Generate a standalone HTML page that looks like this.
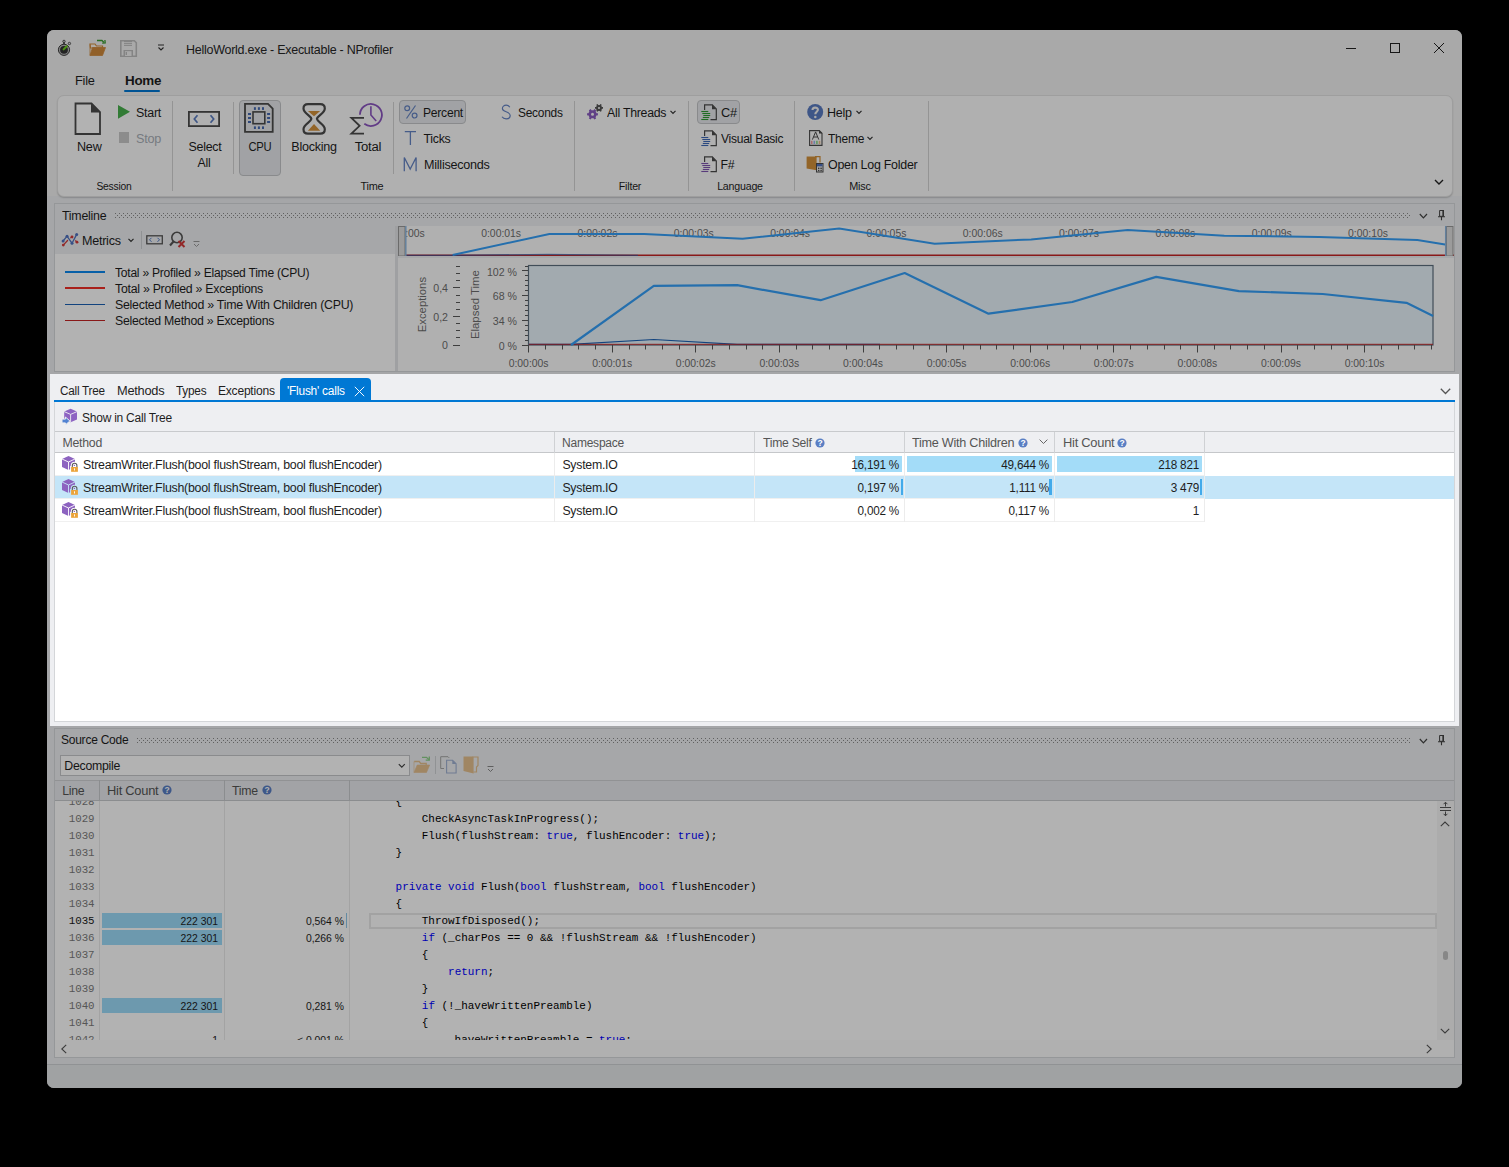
<!DOCTYPE html><html><head><meta charset="utf-8"><title>NProfiler</title><style>
html,body{margin:0;padding:0;}
body{width:1509px;height:1167px;background:#000;position:relative;overflow:hidden;font-family:"Liberation Sans",sans-serif;}
body div{position:absolute;box-sizing:border-box;}
svg{overflow:visible;}
</style></head><body>
<div style="left:47px;top:30px;width:1415px;height:1058px;background:#eceef1;border-radius:7px;"></div>
<div style="left:47px;top:30px;width:1415px;height:36px;background:#f3f3f3;border-radius:7px 7px 0 0;"></div>
<div style="left:47px;top:66px;width:1415px;height:130px;background:#f3f3f3;"></div>
<svg style="position:absolute;left:57px;top:39px;" width="16" height="18" viewBox="0 0 16 18"><circle cx="7" cy="10.8" r="5.6" fill="#b8b8b8" stroke="#3a3a3a" stroke-width="1"/>
<circle cx="7" cy="10.8" r="3.9" fill="#333"/>
<line x1="6.6" y1="10.4" x2="9.8" y2="7.2" stroke="#6ad21a" stroke-width="2" stroke-linecap="round"/>
<circle cx="7" cy="2.4" r="1.2" fill="#e0e0e0" stroke="#444" stroke-width="0.9"/><rect x="6.2" y="3.6" width="1.6" height="1.6" fill="#333"/>
<circle cx="12.4" cy="4.5" r="1.2" fill="#e0e0e0" stroke="#444" stroke-width="0.9"/></svg>
<svg style="position:absolute;left:89px;top:39px;" width="18" height="18" viewBox="0 0 18 18">
<path d="M1 5 h5 l1.5 2 h6 v2 h-12z" fill="#fdf6ec" stroke="#d38d3b" stroke-width="1.2"/>
<path d="M1 16.5 v-11 M1 16.5 h12.5 l3 -8 h-13 l-2.5 8z" fill="#d08a3c" stroke="#d08a3c" stroke-width="0.8"/>
<path d="M8 1.5 h5 l2 2" fill="none" stroke="#3a9c32" stroke-width="1.3"/>
<path d="M13.2 4.2 l3 -0.2 l-0.3 -3" fill="none" stroke="#3a9c32" stroke-width="1.3"/>
</svg>
<svg style="position:absolute;left:120px;top:40px;" width="17" height="17" viewBox="0 0 17 17">
<path d="M0.8 0.8 h13.5 l2 2 v13.4 h-15.5z" fill="none" stroke="#bdbdbd" stroke-width="1.6"/>
<rect x="4" y="1" width="8" height="5" fill="#bdbdbd"/>
<rect x="4" y="2.2" width="8" height="0.9" fill="#f3f3f3"/><rect x="4" y="4.2" width="8" height="0.9" fill="#f3f3f3"/>
<rect x="3.5" y="10" width="9.5" height="6" fill="#bdbdbd"/><rect x="5" y="11.2" width="6.5" height="4.8" fill="#f3f3f3"/><rect x="5.6" y="12" width="1.4" height="3" fill="#bdbdbd"/>
</svg>
<svg style="position:absolute;left:157px;top:44px;" width="8" height="8" viewBox="0 0 8 8"><line x1="1" y1="1" x2="7" y2="1" stroke="#333" stroke-width="1"/><path d="M1.5 3.5 l2.5 2.5 l2.5 -2.5" fill="none" stroke="#333" stroke-width="1.1"/></svg>
<div style="left:186px;top:42px;font-family:'Liberation Sans', sans-serif;font-size:12.4px;line-height:16px;color:#262626;white-space:pre;letter-spacing:-0.250px;transform:scaleX(1.0066);transform-origin:0% 50%;">HelloWorld.exe - Executable - NProfiler</div>
<div style="left:1346px;top:48px;width:10px;height:1px;background:#222;"></div>
<div style="left:1390px;top:43px;width:10px;height:10px;border:1px solid #222;"></div>
<svg style="position:absolute;left:1433px;top:42px;" width="12" height="12" viewBox="0 0 12 12"><path d="M1 1 L11 11 M11 1 L1 11" stroke="#222" stroke-width="1"/></svg>
<div style="left:74.5px;top:73px;font-family:'Liberation Sans', sans-serif;font-size:12.5px;line-height:16px;color:#1e1e1e;white-space:pre;letter-spacing:-0.252px;transform:scaleX(1.0243);transform-origin:0% 50%;">File</div>
<div style="left:124.5px;top:73px;font-family:'Liberation Sans', sans-serif;font-size:12.92px;line-height:16px;color:#1e1e1e;white-space:pre;letter-spacing:-0.260px;transform:scaleX(1.0386);transform-origin:0% 50%;font-weight:bold;">Home</div>
<div style="left:124px;top:90px;width:36px;height:2px;background:#0078d4;border-radius:1px;"></div>
<div style="left:57px;top:95px;width:1396px;height:102px;background:#fdfdfd;border:1px solid #e2e2e2;border-radius:7px;box-shadow:0 1px 1.5px rgba(0,0,0,0.18);"></div>
<div style="left:172px;top:101px;width:1px;height:90px;background:#d4d4d4;"></div>
<div style="left:233px;top:102px;width:1px;height:72px;background:#d4d4d4;"></div>
<div style="left:393px;top:102px;width:1px;height:72px;background:#d4d4d4;"></div>
<div style="left:574px;top:101px;width:1px;height:90px;background:#d4d4d4;"></div>
<div style="left:688px;top:101px;width:1px;height:90px;background:#d4d4d4;"></div>
<div style="left:794px;top:101px;width:1px;height:90px;background:#d4d4d4;"></div>
<div style="left:928px;top:101px;width:1px;height:90px;background:#d4d4d4;"></div>
<svg style="position:absolute;left:74px;top:102px;" width="28" height="34" viewBox="0 0 28 34"><path d="M1.5 1.5 h16 l8.5 8.5 v22 h-24.5z" fill="#fff" stroke="#4b4b4b" stroke-width="1.8"/><path d="M17 1.5 l9 9 h-9z" fill="#4b4b4b"/></svg>
<div style="left:76.5px;top:139px;font-family:'Liberation Sans', sans-serif;font-size:12.3px;line-height:16px;color:#1e1e1e;white-space:pre;letter-spacing:-0.248px;transform:scaleX(1.0267);transform-origin:0% 50%;">New</div>
<svg style="position:absolute;left:118px;top:105px;" width="12" height="14" viewBox="0 0 12 14"><path d="M0 0 L12 6.8 L0 13.8z" fill="#48b04c"/></svg>
<div style="left:136px;top:105px;font-family:'Liberation Sans', sans-serif;font-size:12.3px;line-height:16px;color:#1e1e1e;white-space:pre;letter-spacing:-0.248px;transform:scaleX(1.0106);transform-origin:0% 50%;">Start</div>
<div style="left:119px;top:132px;width:10px;height:11px;background:#c9c9c9;"></div>
<div style="left:136px;top:131px;font-family:'Liberation Sans', sans-serif;font-size:12.3px;line-height:16px;color:#aab0b8;white-space:pre;letter-spacing:-0.248px;transform:scaleX(1.0283);transform-origin:0% 50%;">Stop</div>
<div style="left:74.4px;top:178px;width:80px;text-align:center;font-family:'Liberation Sans', sans-serif;font-size:11.46px;line-height:16px;color:#1e1e1e;white-space:pre;letter-spacing:-0.231px;transform:scaleX(0.9);">Session</div>
<svg style="position:absolute;left:188px;top:111px;" width="32" height="16" viewBox="0 0 32 16"><rect x="0.9" y="0.9" width="30.2" height="14.2" fill="none" stroke="#4b4b4b" stroke-width="1.8"/><path d="M9.5 4.2 l-3.2 3.8 l3.2 3.8 M22.5 4.2 l3.2 3.8 l-3.2 3.8" fill="none" stroke="#5a7cc0" stroke-width="1.7"/></svg>
<div style="left:174.5px;top:139px;width:60px;text-align:center;font-family:'Liberation Sans', sans-serif;font-size:12.3px;line-height:16px;color:#1e1e1e;white-space:pre;letter-spacing:-0.248px;transform:scaleX(1.0092);transform-origin:50% 50%;">Select</div>
<div style="left:174.0px;top:155px;width:60px;text-align:center;font-family:'Liberation Sans', sans-serif;font-size:12.3px;line-height:16px;color:#1e1e1e;white-space:pre;letter-spacing:-0.248px;">All</div>
<div style="left:239px;top:100px;width:42px;height:76px;background:#e7e9ec;border:1px solid #c4c6c9;border-radius:4px;"></div>
<svg style="position:absolute;left:243px;top:102px;" width="32" height="32" viewBox="0 0 32 32"><path d="M2 1.9 H25 L29.7 6.6 V29.8 H2 Z" fill="none" stroke="#4b4b4b" stroke-width="1.8"/>
<rect x="10" y="9.9" width="11.8" height="11.8" fill="none" stroke="#4b4b4b" stroke-width="1.6"/>
<g fill="#4468b0"><rect x="10.9" y="5.2" width="2" height="2.7"/><rect x="14.9" y="5.2" width="2" height="2.7"/><rect x="19" y="5.2" width="2" height="2.7"/>
<rect x="10.9" y="24.4" width="2" height="2.6"/><rect x="14.9" y="24.4" width="2" height="2.6"/><rect x="19" y="24.4" width="2" height="2.6"/>
<rect x="5" y="11" width="3" height="2"/><rect x="5" y="15" width="3" height="2"/><rect x="5" y="19" width="3" height="2"/>
<rect x="24.1" y="11" width="3" height="2"/><rect x="24.1" y="15" width="3" height="2"/><rect x="24.1" y="19" width="3" height="2"/></g></svg>
<div style="left:230.0px;top:139px;width:60px;text-align:center;font-family:'Liberation Sans', sans-serif;font-size:12.3px;line-height:16px;color:#1e1e1e;white-space:pre;letter-spacing:-0.248px;transform:scaleX(0.9117);transform-origin:50% 50%;">CPU</div>
<svg style="position:absolute;left:301px;top:102px;" width="26" height="35" viewBox="0 0 26 35"><path d="M7 2.1 H19.3 C22.5 2.1 23.8 3.6 23.8 6.5 C23.8 11.5 16.5 13.5 15.9 16.9 C16.5 20.3 23.8 22.3 23.8 27.3 C23.8 30.2 22.5 31.7 19.3 31.7 H7 C3.8 31.7 2.5 30.2 2.5 27.3 C2.5 22.3 9.8 20.3 10.4 16.9 C9.8 13.5 2.5 11.5 2.5 6.5 C2.5 3.6 3.8 2.1 7 2.1 Z" fill="none" stroke="#4b4b4b" stroke-width="2.2"/>
<path d="M6.9 8.9 H19.2 L13 14.2z" fill="#d3913b"/><path d="M13 22.1 L19.2 28.7 H6.9z" fill="#d3913b"/></svg>
<div style="left:273.5px;top:139px;width:80px;text-align:center;font-family:'Liberation Sans', sans-serif;font-size:12.3px;line-height:16px;color:#1e1e1e;white-space:pre;letter-spacing:-0.248px;transform:scaleX(1.0222);transform-origin:50% 50%;">Blocking</div>
<svg style="position:absolute;left:349px;top:102px;" width="36" height="34" viewBox="0 0 36 34"><path d="M10.9 12.7 A11 11 0 1 1 15.3 21.8" fill="none" stroke="#8c56c0" stroke-width="1.8"/>
<path d="M21.9 4.2 V13 L27.2 19" fill="none" stroke="#8c56c0" stroke-width="1.6"/>
<path d="M15 15.9 H2.4 L10.6 23.8 L2.4 31.7 H15" fill="none" stroke="#4b4b4b" stroke-width="1.8" stroke-linejoin="miter"/></svg>
<div style="left:337.5px;top:139px;width:60px;text-align:center;font-family:'Liberation Sans', sans-serif;font-size:12.3px;line-height:16px;color:#1e1e1e;white-space:pre;letter-spacing:-0.248px;transform:scaleX(1.0670);transform-origin:50% 50%;">Total</div>
<div style="left:341.9px;top:178px;width:60px;text-align:center;font-family:'Liberation Sans', sans-serif;font-size:11.46px;line-height:16px;color:#1e1e1e;white-space:pre;letter-spacing:-0.231px;transform:scaleX(0.95);">Time</div>
<div style="left:399px;top:100px;width:67px;height:24px;background:#e7e9ec;border:1px solid #c4c6c9;border-radius:4px;"></div>
<svg style="position:absolute;left:404px;top:104px;" width="14" height="16" viewBox="0 0 14 16"><circle cx="3.2" cy="4.2" r="2.4" fill="none" stroke="#6584c4" stroke-width="1.2"/><circle cx="10.6" cy="11.6" r="2.4" fill="none" stroke="#6584c4" stroke-width="1.2"/><path d="M11.5 1.5 L2.5 14.5" stroke="#6584c4" stroke-width="1.2"/></svg>
<div style="left:422.5px;top:105px;font-family:'Liberation Sans', sans-serif;font-size:12.3px;line-height:16px;color:#1e1e1e;white-space:pre;letter-spacing:-0.248px;transform:scaleX(0.9839);transform-origin:0% 50%;">Percent</div>
<svg style="position:absolute;left:404px;top:130px;" width="14" height="16" viewBox="0 0 14 16"><path d="M0.8 1.6 H12 M6.4 1.6 V15" fill="none" stroke="#6584c4" stroke-width="1.3"/></svg>
<div style="left:423.5px;top:131px;font-family:'Liberation Sans', sans-serif;font-size:12.3px;line-height:16px;color:#1e1e1e;white-space:pre;letter-spacing:-0.248px;">Ticks</div>
<svg style="position:absolute;left:403px;top:156px;" width="15" height="16" viewBox="0 0 15 16"><path d="M1.3 15.2 V1.5 L7.2 13 L13.1 1.5 V15.2" fill="none" stroke="#6584c4" stroke-width="1.3" stroke-linejoin="miter"/></svg>
<div style="left:423.5px;top:157px;font-family:'Liberation Sans', sans-serif;font-size:12.3px;line-height:16px;color:#1e1e1e;white-space:pre;letter-spacing:-0.248px;transform:scaleX(1.0247);transform-origin:0% 50%;">Milliseconds</div>
<svg style="position:absolute;left:501px;top:104px;" width="10" height="16" viewBox="0 0 10 16"><path d="M8.8 3.2 C8 1.8 6.8 1.2 5.2 1.2 C3 1.2 1.4 2.5 1.4 4.4 C1.4 8.4 9.2 7.2 9.2 11.6 C9.2 13.6 7.5 14.9 5.1 14.9 C3.3 14.9 1.9 14.2 1 12.8" fill="none" stroke="#6584c4" stroke-width="1.2"/></svg>
<div style="left:517.5px;top:105px;font-family:'Liberation Sans', sans-serif;font-size:12.3px;line-height:16px;color:#1e1e1e;white-space:pre;letter-spacing:-0.248px;transform:scaleX(0.9689);transform-origin:0% 50%;">Seconds</div>
<svg style="position:absolute;left:580px;top:98px;" width="30" height="26" viewBox="0 0 30 26"><circle cx="12.5" cy="16.3" r="2.75" fill="none" stroke="#8a5cc0" stroke-width="2.50"/><line x1="15.90" y1="16.30" x2="17.90" y2="16.30" stroke="#8a5cc0" stroke-width="2.2"/><line x1="14.20" y1="19.24" x2="15.20" y2="20.98" stroke="#8a5cc0" stroke-width="2.2"/><line x1="10.80" y1="19.24" x2="9.80" y2="20.98" stroke="#8a5cc0" stroke-width="2.2"/><line x1="9.10" y1="16.30" x2="7.10" y2="16.30" stroke="#8a5cc0" stroke-width="2.2"/><line x1="10.80" y1="13.36" x2="9.80" y2="11.62" stroke="#8a5cc0" stroke-width="2.2"/><line x1="14.20" y1="13.36" x2="15.20" y2="11.62" stroke="#8a5cc0" stroke-width="2.2"/><circle cx="19" cy="9.9" r="2.00" fill="none" stroke="#555" stroke-width="2.00"/><line x1="21.40" y1="9.90" x2="23.00" y2="9.90" stroke="#555" stroke-width="1.7"/><line x1="20.20" y1="11.98" x2="21.00" y2="13.36" stroke="#555" stroke-width="1.7"/><line x1="17.80" y1="11.98" x2="17.00" y2="13.36" stroke="#555" stroke-width="1.7"/><line x1="16.60" y1="9.90" x2="15.00" y2="9.90" stroke="#555" stroke-width="1.7"/><line x1="17.80" y1="7.82" x2="17.00" y2="6.44" stroke="#555" stroke-width="1.7"/><line x1="20.20" y1="7.82" x2="21.00" y2="6.44" stroke="#555" stroke-width="1.7"/></svg>
<div style="left:607px;top:105px;font-family:'Liberation Sans', sans-serif;font-size:12.3px;line-height:16px;color:#1e1e1e;white-space:pre;letter-spacing:-0.248px;transform:scaleX(1.0006);transform-origin:0% 50%;">All Threads</div>
<svg style="position:absolute;left:670px;top:110px;" width="6" height="5" viewBox="0 0 6 5"><path d="M0.5 0.8 l2.5 2.6 l2.5 -2.6" fill="none" stroke="#333" stroke-width="1.2"/></svg>
<div style="left:600.3px;top:178px;width:60px;text-align:center;font-family:'Liberation Sans', sans-serif;font-size:11.46px;line-height:16px;color:#1e1e1e;white-space:pre;letter-spacing:-0.231px;transform:scaleX(0.93);">Filter</div>
<div style="left:697px;top:100px;width:43px;height:24px;background:#e7e9ec;border:1px solid #c4c6c9;border-radius:4px;"></div>
<svg style="position:absolute;left:701px;top:104px;" width="17" height="17" viewBox="0 0 17 17"><path d="M3.6 6 V0.9 H11.3 L15.3 4.9 V15.6 H9.5" fill="none" stroke="#4b4b4b" stroke-width="1.2"/><path d="M11 0.6 L15.6 5.2 H11z" fill="#4b4b4b"/>
<g stroke="#2e9b33" stroke-width="1.1"><line x1="0.3" y1="7.5" x2="7.3" y2="7.5"/><line x1="1.3" y1="9.5" x2="9.2" y2="9.5"/><line x1="2.3" y1="11.5" x2="9.2" y2="11.5"/><line x1="1.8" y1="13.5" x2="8.2" y2="13.5"/><line x1="0.3" y1="15.5" x2="7.3" y2="15.5"/></g></svg>
<div style="left:720.5px;top:105px;font-family:'Liberation Sans', sans-serif;font-size:12.3px;line-height:16px;color:#1e1e1e;white-space:pre;letter-spacing:-0.248px;transform:scaleX(1.0375);transform-origin:0% 50%;">C#</div>
<svg style="position:absolute;left:701px;top:130px;" width="17" height="17" viewBox="0 0 17 17"><path d="M3.6 6 V0.9 H11.3 L15.3 4.9 V15.6 H9.5" fill="none" stroke="#4b4b4b" stroke-width="1.2"/><path d="M11 0.6 L15.6 5.2 H11z" fill="#4b4b4b"/>
<g stroke="#3e69b8" stroke-width="1.1"><line x1="0.3" y1="7.5" x2="7.3" y2="7.5"/><line x1="1.3" y1="9.5" x2="9.2" y2="9.5"/><line x1="2.3" y1="11.5" x2="9.2" y2="11.5"/><line x1="1.8" y1="13.5" x2="8.2" y2="13.5"/><line x1="0.3" y1="15.5" x2="7.3" y2="15.5"/></g></svg>
<div style="left:720.5px;top:131px;font-family:'Liberation Sans', sans-serif;font-size:12.3px;line-height:16px;color:#1e1e1e;white-space:pre;letter-spacing:-0.248px;transform:scaleX(0.9765);transform-origin:0% 50%;">Visual Basic</div>
<svg style="position:absolute;left:701px;top:156px;" width="17" height="17" viewBox="0 0 17 17"><path d="M3.6 6 V0.9 H11.3 L15.3 4.9 V15.6 H9.5" fill="none" stroke="#4b4b4b" stroke-width="1.2"/><path d="M11 0.6 L15.6 5.2 H11z" fill="#4b4b4b"/>
<g stroke="#7f55b0" stroke-width="1.1"><line x1="0.3" y1="7.5" x2="7.3" y2="7.5"/><line x1="1.3" y1="9.5" x2="9.2" y2="9.5"/><line x1="2.3" y1="11.5" x2="9.2" y2="11.5"/><line x1="1.8" y1="13.5" x2="8.2" y2="13.5"/><line x1="0.3" y1="15.5" x2="7.3" y2="15.5"/></g></svg>
<div style="left:720.5px;top:157px;font-family:'Liberation Sans', sans-serif;font-size:12.3px;line-height:16px;color:#1e1e1e;white-space:pre;letter-spacing:-0.248px;">F#</div>
<div style="left:700.1px;top:178px;width:80px;text-align:center;font-family:'Liberation Sans', sans-serif;font-size:11.46px;line-height:16px;color:#1e1e1e;white-space:pre;letter-spacing:-0.231px;transform:scaleX(0.93);">Language</div>
<svg style="position:absolute;left:807px;top:104px;" width="17" height="17" viewBox="0 0 17 17"><circle cx="8.2" cy="8" r="8" fill="#5a7cc2"/><path d="M5.5 6 C5.5 2.9 10.9 2.9 10.9 5.8 C10.9 7.7 8.3 7.9 8.3 10.3" fill="none" stroke="#f2f2f2" stroke-width="2.1"/><circle cx="8.3" cy="12.9" r="1.25" fill="#f2f2f2"/></svg>
<div style="left:826.5px;top:105px;font-family:'Liberation Sans', sans-serif;font-size:12.3px;line-height:16px;color:#1e1e1e;white-space:pre;letter-spacing:-0.248px;transform:scaleX(1.0203);transform-origin:0% 50%;">Help</div>
<svg style="position:absolute;left:856px;top:110px;" width="6" height="5" viewBox="0 0 6 5"><path d="M0.5 0.8 l2.5 2.6 l2.5 -2.6" fill="none" stroke="#333" stroke-width="1.2"/></svg>
<svg style="position:absolute;left:809px;top:130px;" width="14" height="17" viewBox="0 0 14 17"><path d="M0.6 0.6 H10.3 L13 3.3 V15.4 H0.6z" fill="none" stroke="#4b4b4b" stroke-width="1.1"/><path d="M10 0.2 L13.4 3.6 H10z" fill="#4b4b4b"/>
<path d="M3.4 9.6 L6.6 1.9 L9.8 9.6 M4.6 7 H8.6" fill="none" stroke="#4b4b4b" stroke-width="1"/>
<rect x="1.9" y="10.8" width="1.6" height="3.2" fill="#f09aa0"/><rect x="4.5" y="10.8" width="1.6" height="3.2" fill="#9ab8f0"/><rect x="7.1" y="10.8" width="1.6" height="3.2" fill="#8ad88a"/><rect x="9.7" y="10.8" width="1.6" height="3.2" fill="#f0c08a"/></svg>
<div style="left:827.5px;top:131px;font-family:'Liberation Sans', sans-serif;font-size:12.3px;line-height:16px;color:#1e1e1e;white-space:pre;letter-spacing:-0.248px;transform:scaleX(0.9745);transform-origin:0% 50%;">Theme</div>
<svg style="position:absolute;left:867px;top:136px;" width="6" height="5" viewBox="0 0 6 5"><path d="M0.5 0.8 l2.5 2.6 l2.5 -2.6" fill="none" stroke="#333" stroke-width="1.2"/></svg>
<svg style="position:absolute;left:806px;top:156px;" width="18" height="18" viewBox="0 0 18 18"><path d="M9 0.6 H14 V6.5" fill="none" stroke="#d3913b" stroke-width="1.2"/>
<path d="M0.6 0.5 H10 L10.6 1.2 V14.2 L0.6 12.5z" fill="#d3913b"/>
<rect x="10.5" y="7.5" width="6.5" height="8.5" fill="#f0f0f0" stroke="#4b4b4b" stroke-width="1"/><rect x="11" y="8" width="5.5" height="2.4" fill="#4f72c0"/>
<g fill="#4b4b4b"><rect x="12" y="11.6" width="1.4" height="1.4"/><rect x="14.4" y="11.6" width="1.4" height="1.4"/><rect x="12" y="13.8" width="1.4" height="1.4"/><rect x="14.4" y="13.8" width="1.4" height="1.4"/></g></svg>
<div style="left:827.5px;top:157px;font-family:'Liberation Sans', sans-serif;font-size:12.3px;line-height:16px;color:#1e1e1e;white-space:pre;letter-spacing:-0.248px;transform:scaleX(1.0102);transform-origin:0% 50%;">Open Log Folder</div>
<div style="left:830.3px;top:178px;width:60px;text-align:center;font-family:'Liberation Sans', sans-serif;font-size:11.46px;line-height:16px;color:#1e1e1e;white-space:pre;letter-spacing:-0.231px;transform:scaleX(0.95);">Misc</div>
<svg style="position:absolute;left:1434px;top:179px;" width="10" height="7" viewBox="0 0 10 7"><path d="M1 1 l4 4 l4 -4" fill="none" stroke="#222" stroke-width="1.4"/></svg>
<div style="left:54px;top:203px;width:1401px;height:169px;background:#eef0f2;border:1px solid #d6d8db;"></div>
<div style="left:61.5px;top:208px;font-family:'Liberation Sans', sans-serif;font-size:12.3px;line-height:16px;color:#1e1e1e;white-space:pre;letter-spacing:-0.248px;transform:scaleX(1.0058);transform-origin:0% 50%;">Timeline</div>
<svg style="position:absolute;left:115px;top:213px;overflow:hidden" width="1296" height="5" viewBox="0 0 1296 5"><defs><pattern id="grp1" x="0" y="0" width="4" height="4" patternUnits="userSpaceOnUse"><rect x="0" y="0" width="1" height="1" fill="#8a8a8a"/><rect x="2" y="2" width="1" height="1" fill="#8a8a8a"/></pattern></defs><rect x="0" y="0" width="1296" height="5" fill="url(#grp1)"/></svg>
<svg style="position:absolute;left:1419px;top:211px;" width="10" height="8" viewBox="0 0 10 8"><path d="M0.8 3 l3.6 3.8 l3.6 -3.8" fill="none" stroke="#444" stroke-width="1.2"/></svg>
<svg style="position:absolute;left:1437px;top:208px;" width="10" height="13" viewBox="0 0 10 13"><path d="M2.6 2.5 h3.8 v5.8 h-3.8z" fill="none" stroke="#444" stroke-width="1"/><rect x="5.4" y="2" width="1.6" height="6.3" fill="#444"/><path d="M1 8.8 h7 M4.5 8.8 v3.5" fill="none" stroke="#444" stroke-width="1.1"/></svg>
<svg style="position:absolute;left:61px;top:232px;" width="18" height="16" viewBox="0 0 18 16"><polyline points="2.3,13.1 6.3,8.8 11,4.8 16,10.2" fill="none" stroke="#d23a3a" stroke-width="1.3"/>
<polyline points="2.1,9 6.05,4.2 11,11.2 15.7,2.4" fill="none" stroke="#eef0f2" stroke-width="3.2"/>
<polyline points="2.1,9 6.05,4.2 11,11.2 15.7,2.4" fill="none" stroke="#4f72c0" stroke-width="1.3"/>
<g fill="#4f72c0"><circle cx="2.1" cy="9" r="1.5"/><circle cx="6.05" cy="4.2" r="1.5"/><circle cx="11" cy="11.2" r="1.5"/><circle cx="15.7" cy="2.4" r="1.5"/></g>
<g fill="#d23a3a"><circle cx="2.3" cy="13.1" r="1.4"/><circle cx="11" cy="4.8" r="1.4"/><circle cx="16" cy="10.2" r="1.4"/></g></svg>
<div style="left:81.5px;top:233px;font-family:'Liberation Sans', sans-serif;font-size:12.3px;line-height:16px;color:#1e1e1e;white-space:pre;letter-spacing:-0.248px;transform:scaleX(1.0211);transform-origin:0% 50%;">Metrics</div>
<svg style="position:absolute;left:128px;top:238px;" width="6" height="5" viewBox="0 0 6 5"><path d="M0.5 0.8 l2.5 2.6 l2.5 -2.6" fill="none" stroke="#333" stroke-width="1.2"/></svg>
<div style="left:141px;top:231px;width:1px;height:18px;background:#cfd1d4;"></div>
<svg style="position:absolute;left:146px;top:235px;" width="18" height="10" viewBox="0 0 18 10"><rect x="0.8" y="0.8" width="15.5" height="8" fill="none" stroke="#555" stroke-width="1.3"/><path d="M5.5 2.8 l-2 2 l2 2 M11.5 2.8 l2 2 l-2 2" fill="none" stroke="#4f78c4" stroke-width="1"/></svg>
<svg style="position:absolute;left:169px;top:231px;" width="17" height="17" viewBox="0 0 17 17"><circle cx="8" cy="6.5" r="5.2" fill="none" stroke="#555" stroke-width="1.6"/><path d="M4.5 10.5 l-3.5 4" stroke="#555" stroke-width="2"/><path d="M9.5 10 l6 6 M15.5 10 l-6 6" stroke="#d23a3a" stroke-width="2"/></svg>
<svg style="position:absolute;left:193px;top:241px;" width="7" height="8" viewBox="0 0 7 8"><line x1="0.5" y1="0.5" x2="6.5" y2="0.5" stroke="#999" stroke-width="1"/><path d="M1 3 l2.5 2.5 l2.5 -2.5" fill="none" stroke="#999" stroke-width="1"/></svg>
<div style="left:55px;top:254px;width:340px;height:117px;background:#fff;"></div>
<div style="left:395px;top:226px;width:3px;height:145px;background:#e4e6e9;"></div>
<div style="left:65px;top:271.0px;width:40px;height:2px;background:#0b88f0;"></div>
<div style="left:115px;top:265px;font-family:'Liberation Sans', sans-serif;font-size:12.3px;line-height:16px;color:#1e1e1e;white-space:pre;letter-spacing:-0.248px;transform:scaleX(0.9819);transform-origin:0% 50%;">Total » Profiled » Elapsed Time (CPU)</div>
<div style="left:65px;top:287.0px;width:40px;height:2px;background:#f32e28;"></div>
<div style="left:115px;top:281px;font-family:'Liberation Sans', sans-serif;font-size:12.3px;line-height:16px;color:#1e1e1e;white-space:pre;letter-spacing:-0.248px;">Total » Profiled » Exceptions</div>
<div style="left:65px;top:304.0px;width:40px;height:1px;background:#1a61b5;"></div>
<div style="left:115px;top:297px;font-family:'Liberation Sans', sans-serif;font-size:12.3px;line-height:16px;color:#1e1e1e;white-space:pre;letter-spacing:-0.248px;transform:scaleX(1.0052);transform-origin:0% 50%;">Selected Method » Time With Children (CPU)</div>
<div style="left:65px;top:320.0px;width:40px;height:1px;background:#c52525;"></div>
<div style="left:115px;top:313px;font-family:'Liberation Sans', sans-serif;font-size:12.3px;line-height:16px;color:#1e1e1e;white-space:pre;letter-spacing:-0.248px;">Selected Method » Exceptions</div>
<div style="left:398px;top:226px;width:1056px;height:30px;background:#fdfdfd;"></div>
<svg style="position:absolute;left:398px;top:226px;overflow:hidden" width="1056" height="30" viewBox="0 0 1056 30"><text x="-13.1" y="10.7" font-family="Liberation Sans" font-size="10.4" fill="#6e6e6e">0:00:00s</text><text x="83.2" y="10.7" font-family="Liberation Sans" font-size="10.4" fill="#6e6e6e">0:00:01s</text><text x="179.5" y="10.7" font-family="Liberation Sans" font-size="10.4" fill="#6e6e6e">0:00:02s</text><text x="275.8" y="10.7" font-family="Liberation Sans" font-size="10.4" fill="#6e6e6e">0:00:03s</text><text x="372.2" y="10.7" font-family="Liberation Sans" font-size="10.4" fill="#6e6e6e">0:00:04s</text><text x="468.5" y="10.7" font-family="Liberation Sans" font-size="10.4" fill="#6e6e6e">0:00:05s</text><text x="564.8" y="10.7" font-family="Liberation Sans" font-size="10.4" fill="#6e6e6e">0:00:06s</text><text x="661.1" y="10.7" font-family="Liberation Sans" font-size="10.4" fill="#6e6e6e">0:00:07s</text><text x="757.4" y="10.7" font-family="Liberation Sans" font-size="10.4" fill="#6e6e6e">0:00:08s</text><text x="853.8" y="10.7" font-family="Liberation Sans" font-size="10.4" fill="#6e6e6e">0:00:09s</text><text x="950.1" y="10.7" font-family="Liberation Sans" font-size="10.4" fill="#6e6e6e">0:00:10s</text>
<line x1="7" y1="29.3" x2="1056" y2="29.3" stroke="#c52525" stroke-width="1.4"/>
<polyline points="7,29.3 56,29.3 150,28.4 240,29.3" fill="none" stroke="#1a61b5" stroke-width="1.3" stroke-opacity="0.6"/>
<polyline points="54.6,29.0 151.3,8.0 246.1,8.0 344.5,12.7 441.2,2.6 536.6,17.7 633.2,13.4 729.7,3.9 826.3,9.7 921.0,11.0 1019.4,14.0 1048.6,18.8" fill="none" stroke="#35a0f8" stroke-width="2"/>
<rect x="0.5" y="0.5" width="6.5" height="29.5" fill="#dedede" stroke="#9a9a9a" stroke-width="1"/>
<line x1="7.8" y1="0" x2="7.8" y2="30" stroke="#8fb8e0" stroke-width="1.5"/>
<rect x="1048.5" y="0.5" width="6.5" height="29.5" fill="#dedede" stroke="#9a9a9a" stroke-width="1"/>
<line x1="1047.7" y1="0" x2="1047.7" y2="30" stroke="#8fb8e0" stroke-width="1.5"/>
</svg>
<div style="left:398px;top:258px;width:1056px;height:113px;background:#fdfdfd;"></div>
<svg style="position:absolute;left:0px;top:0px;pointer-events:none" width="1509" height="400" viewBox="0 0 1509 400"><text transform="translate(426,304.6) rotate(-90)" text-anchor="middle" font-family="Liberation Sans" font-size="11.3" fill="#6e6e6e">Exceptions</text><text transform="translate(479,304.6) rotate(-90)" text-anchor="middle" font-family="Liberation Sans" font-size="11.4" fill="#6e6e6e">Elapsed Time</text><text x="448" y="349.2" text-anchor="end" font-family="Liberation Sans" font-size="10.6" fill="#6e6e6e">0</text><text x="448" y="320.7" text-anchor="end" font-family="Liberation Sans" font-size="10.6" fill="#6e6e6e">0,2</text><text x="448" y="292.0" text-anchor="end" font-family="Liberation Sans" font-size="10.6" fill="#6e6e6e">0,4</text><line x1="453" y1="345.5" x2="460" y2="345.5" stroke="#5a5a5a" stroke-width="1"/><line x1="456" y1="337.5" x2="460" y2="337.5" stroke="#5a5a5a" stroke-width="1"/><line x1="456" y1="330.5" x2="460" y2="330.5" stroke="#5a5a5a" stroke-width="1"/><line x1="456" y1="323.5" x2="460" y2="323.5" stroke="#5a5a5a" stroke-width="1"/><line x1="453" y1="316.5" x2="460" y2="316.5" stroke="#5a5a5a" stroke-width="1"/><line x1="456" y1="309.5" x2="460" y2="309.5" stroke="#5a5a5a" stroke-width="1"/><line x1="456" y1="302.5" x2="460" y2="302.5" stroke="#5a5a5a" stroke-width="1"/><line x1="456" y1="295.5" x2="460" y2="295.5" stroke="#5a5a5a" stroke-width="1"/><line x1="453" y1="287.5" x2="460" y2="287.5" stroke="#5a5a5a" stroke-width="1"/><line x1="456" y1="280.5" x2="460" y2="280.5" stroke="#5a5a5a" stroke-width="1"/><line x1="456" y1="273.5" x2="460" y2="273.5" stroke="#5a5a5a" stroke-width="1"/><line x1="456" y1="266.5" x2="460" y2="266.5" stroke="#5a5a5a" stroke-width="1"/><text x="517" y="275.7" text-anchor="end" font-family="Liberation Sans" font-size="10.6" fill="#6e6e6e">102 %</text><text x="517" y="299.7" text-anchor="end" font-family="Liberation Sans" font-size="10.6" fill="#6e6e6e">68 %</text><text x="517" y="324.7" text-anchor="end" font-family="Liberation Sans" font-size="10.6" fill="#6e6e6e">34 %</text><text x="517" y="349.8" text-anchor="end" font-family="Liberation Sans" font-size="10.6" fill="#6e6e6e">0 %</text><line x1="522" y1="345.5" x2="529" y2="345.5" stroke="#5a5a5a" stroke-width="1"/><line x1="525" y1="340.5" x2="529" y2="340.5" stroke="#5a5a5a" stroke-width="1"/><line x1="525" y1="335.5" x2="529" y2="335.5" stroke="#5a5a5a" stroke-width="1"/><line x1="525" y1="330.5" x2="529" y2="330.5" stroke="#5a5a5a" stroke-width="1"/><line x1="525" y1="325.5" x2="529" y2="325.5" stroke="#5a5a5a" stroke-width="1"/><line x1="522" y1="320.5" x2="529" y2="320.5" stroke="#5a5a5a" stroke-width="1"/><line x1="525" y1="315.5" x2="529" y2="315.5" stroke="#5a5a5a" stroke-width="1"/><line x1="525" y1="310.5" x2="529" y2="310.5" stroke="#5a5a5a" stroke-width="1"/><line x1="525" y1="305.5" x2="529" y2="305.5" stroke="#5a5a5a" stroke-width="1"/><line x1="525" y1="300.5" x2="529" y2="300.5" stroke="#5a5a5a" stroke-width="1"/><line x1="522" y1="295.5" x2="529" y2="295.5" stroke="#5a5a5a" stroke-width="1"/><line x1="525" y1="290.5" x2="529" y2="290.5" stroke="#5a5a5a" stroke-width="1"/><line x1="525" y1="285.5" x2="529" y2="285.5" stroke="#5a5a5a" stroke-width="1"/><line x1="525" y1="280.5" x2="529" y2="280.5" stroke="#5a5a5a" stroke-width="1"/><line x1="525" y1="275.5" x2="529" y2="275.5" stroke="#5a5a5a" stroke-width="1"/><line x1="522" y1="270.5" x2="529" y2="270.5" stroke="#5a5a5a" stroke-width="1"/><line x1="525" y1="266.5" x2="529" y2="266.5" stroke="#5a5a5a" stroke-width="1"/><rect x="528.5" y="265.5" width="904.5" height="79.5" fill="#e9f4fb" stroke="#5e6f7e" stroke-width="1.2"/><line x1="528.5" y1="345" x2="528.5" y2="352.5" stroke="#5a5a5a" stroke-width="1"/><line x1="545.5" y1="345" x2="545.5" y2="349.5" stroke="#5a5a5a" stroke-width="1"/><line x1="562.5" y1="345" x2="562.5" y2="349.5" stroke="#5a5a5a" stroke-width="1"/><line x1="578.5" y1="345" x2="578.5" y2="349.5" stroke="#5a5a5a" stroke-width="1"/><line x1="595.5" y1="345" x2="595.5" y2="349.5" stroke="#5a5a5a" stroke-width="1"/><line x1="612.5" y1="345" x2="612.5" y2="352.5" stroke="#5a5a5a" stroke-width="1"/><line x1="629.5" y1="345" x2="629.5" y2="349.5" stroke="#5a5a5a" stroke-width="1"/><line x1="645.5" y1="345" x2="645.5" y2="349.5" stroke="#5a5a5a" stroke-width="1"/><line x1="662.5" y1="345" x2="662.5" y2="349.5" stroke="#5a5a5a" stroke-width="1"/><line x1="679.5" y1="345" x2="679.5" y2="349.5" stroke="#5a5a5a" stroke-width="1"/><line x1="695.5" y1="345" x2="695.5" y2="352.5" stroke="#5a5a5a" stroke-width="1"/><line x1="712.5" y1="345" x2="712.5" y2="349.5" stroke="#5a5a5a" stroke-width="1"/><line x1="729.5" y1="345" x2="729.5" y2="349.5" stroke="#5a5a5a" stroke-width="1"/><line x1="746.5" y1="345" x2="746.5" y2="349.5" stroke="#5a5a5a" stroke-width="1"/><line x1="762.5" y1="345" x2="762.5" y2="349.5" stroke="#5a5a5a" stroke-width="1"/><line x1="779.5" y1="345" x2="779.5" y2="352.5" stroke="#5a5a5a" stroke-width="1"/><line x1="796.5" y1="345" x2="796.5" y2="349.5" stroke="#5a5a5a" stroke-width="1"/><line x1="812.5" y1="345" x2="812.5" y2="349.5" stroke="#5a5a5a" stroke-width="1"/><line x1="829.5" y1="345" x2="829.5" y2="349.5" stroke="#5a5a5a" stroke-width="1"/><line x1="846.5" y1="345" x2="846.5" y2="349.5" stroke="#5a5a5a" stroke-width="1"/><line x1="863.5" y1="345" x2="863.5" y2="352.5" stroke="#5a5a5a" stroke-width="1"/><line x1="879.5" y1="345" x2="879.5" y2="349.5" stroke="#5a5a5a" stroke-width="1"/><line x1="896.5" y1="345" x2="896.5" y2="349.5" stroke="#5a5a5a" stroke-width="1"/><line x1="913.5" y1="345" x2="913.5" y2="349.5" stroke="#5a5a5a" stroke-width="1"/><line x1="929.5" y1="345" x2="929.5" y2="349.5" stroke="#5a5a5a" stroke-width="1"/><line x1="946.5" y1="345" x2="946.5" y2="352.5" stroke="#5a5a5a" stroke-width="1"/><line x1="963.5" y1="345" x2="963.5" y2="349.5" stroke="#5a5a5a" stroke-width="1"/><line x1="980.5" y1="345" x2="980.5" y2="349.5" stroke="#5a5a5a" stroke-width="1"/><line x1="996.5" y1="345" x2="996.5" y2="349.5" stroke="#5a5a5a" stroke-width="1"/><line x1="1013.5" y1="345" x2="1013.5" y2="349.5" stroke="#5a5a5a" stroke-width="1"/><line x1="1030.5" y1="345" x2="1030.5" y2="352.5" stroke="#5a5a5a" stroke-width="1"/><line x1="1047.5" y1="345" x2="1047.5" y2="349.5" stroke="#5a5a5a" stroke-width="1"/><line x1="1063.5" y1="345" x2="1063.5" y2="349.5" stroke="#5a5a5a" stroke-width="1"/><line x1="1080.5" y1="345" x2="1080.5" y2="349.5" stroke="#5a5a5a" stroke-width="1"/><line x1="1097.5" y1="345" x2="1097.5" y2="349.5" stroke="#5a5a5a" stroke-width="1"/><line x1="1113.5" y1="345" x2="1113.5" y2="352.5" stroke="#5a5a5a" stroke-width="1"/><line x1="1130.5" y1="345" x2="1130.5" y2="349.5" stroke="#5a5a5a" stroke-width="1"/><line x1="1147.5" y1="345" x2="1147.5" y2="349.5" stroke="#5a5a5a" stroke-width="1"/><line x1="1164.5" y1="345" x2="1164.5" y2="349.5" stroke="#5a5a5a" stroke-width="1"/><line x1="1180.5" y1="345" x2="1180.5" y2="349.5" stroke="#5a5a5a" stroke-width="1"/><line x1="1197.5" y1="345" x2="1197.5" y2="352.5" stroke="#5a5a5a" stroke-width="1"/><line x1="1214.5" y1="345" x2="1214.5" y2="349.5" stroke="#5a5a5a" stroke-width="1"/><line x1="1230.5" y1="345" x2="1230.5" y2="349.5" stroke="#5a5a5a" stroke-width="1"/><line x1="1247.5" y1="345" x2="1247.5" y2="349.5" stroke="#5a5a5a" stroke-width="1"/><line x1="1264.5" y1="345" x2="1264.5" y2="349.5" stroke="#5a5a5a" stroke-width="1"/><line x1="1281.5" y1="345" x2="1281.5" y2="352.5" stroke="#5a5a5a" stroke-width="1"/><line x1="1297.5" y1="345" x2="1297.5" y2="349.5" stroke="#5a5a5a" stroke-width="1"/><line x1="1314.5" y1="345" x2="1314.5" y2="349.5" stroke="#5a5a5a" stroke-width="1"/><line x1="1331.5" y1="345" x2="1331.5" y2="349.5" stroke="#5a5a5a" stroke-width="1"/><line x1="1347.5" y1="345" x2="1347.5" y2="349.5" stroke="#5a5a5a" stroke-width="1"/><line x1="1364.5" y1="345" x2="1364.5" y2="352.5" stroke="#5a5a5a" stroke-width="1"/><line x1="1381.5" y1="345" x2="1381.5" y2="349.5" stroke="#5a5a5a" stroke-width="1"/><line x1="1398.5" y1="345" x2="1398.5" y2="349.5" stroke="#5a5a5a" stroke-width="1"/><line x1="1414.5" y1="345" x2="1414.5" y2="349.5" stroke="#5a5a5a" stroke-width="1"/><line x1="1431.5" y1="345" x2="1431.5" y2="349.5" stroke="#5a5a5a" stroke-width="1"/><text x="528.6" y="366.8" text-anchor="middle" font-family="Liberation Sans" font-size="10.4" fill="#6e6e6e">0:00:00s</text><text x="612.2" y="366.8" text-anchor="middle" font-family="Liberation Sans" font-size="10.4" fill="#6e6e6e">0:00:01s</text><text x="695.8" y="366.8" text-anchor="middle" font-family="Liberation Sans" font-size="10.4" fill="#6e6e6e">0:00:02s</text><text x="779.4" y="366.8" text-anchor="middle" font-family="Liberation Sans" font-size="10.4" fill="#6e6e6e">0:00:03s</text><text x="863.0" y="366.8" text-anchor="middle" font-family="Liberation Sans" font-size="10.4" fill="#6e6e6e">0:00:04s</text><text x="946.6" y="366.8" text-anchor="middle" font-family="Liberation Sans" font-size="10.4" fill="#6e6e6e">0:00:05s</text><text x="1030.2" y="366.8" text-anchor="middle" font-family="Liberation Sans" font-size="10.4" fill="#6e6e6e">0:00:06s</text><text x="1113.8" y="366.8" text-anchor="middle" font-family="Liberation Sans" font-size="10.4" fill="#6e6e6e">0:00:07s</text><text x="1197.4" y="366.8" text-anchor="middle" font-family="Liberation Sans" font-size="10.4" fill="#6e6e6e">0:00:08s</text><text x="1281.0" y="366.8" text-anchor="middle" font-family="Liberation Sans" font-size="10.4" fill="#6e6e6e">0:00:09s</text><text x="1364.6" y="366.8" text-anchor="middle" font-family="Liberation Sans" font-size="10.4" fill="#6e6e6e">0:00:10s</text><polyline points="529,344.3 571,344.3 653.8,339.5 737,344.3 880,344.3" fill="none" stroke="#1a61b5" stroke-width="1.2"/><line x1="529" y1="344.4" x2="1433" y2="344.4" stroke="#c52525" stroke-width="1.3" stroke-opacity="0.75"/><polyline points="571,345 653.8,285.9 737.2,285.2 820.6,300.2 904.7,273 988.5,313.7 1072.3,302 1156.2,276.9 1238.9,291.1 1322.7,294 1406.5,302.8 1433.1,315.9" fill="none" stroke="#35a0f8" stroke-width="2.2" stroke-linejoin="round"/></svg>
<div style="left:50px;top:374px;width:1409px;height:352px;background:#eeeff2;"></div>
<div style="left:60.3px;top:383px;font-family:'Liberation Sans', sans-serif;font-size:12.3px;line-height:16px;color:#1e1e1e;white-space:pre;letter-spacing:-0.248px;transform:scaleX(0.9555);transform-origin:0% 50%;">Call Tree</div>
<div style="left:117.4px;top:383px;font-family:'Liberation Sans', sans-serif;font-size:12.3px;line-height:16px;color:#1e1e1e;white-space:pre;letter-spacing:-0.248px;transform:scaleX(1.0409);transform-origin:0% 50%;">Methods</div>
<div style="left:176.4px;top:383px;font-family:'Liberation Sans', sans-serif;font-size:12.3px;line-height:16px;color:#1e1e1e;white-space:pre;letter-spacing:-0.248px;transform:scaleX(0.9595);transform-origin:0% 50%;">Types</div>
<div style="left:218.4px;top:383px;font-family:'Liberation Sans', sans-serif;font-size:12.3px;line-height:16px;color:#1e1e1e;white-space:pre;letter-spacing:-0.248px;transform:scaleX(0.9828);transform-origin:0% 50%;">Exceptions</div>
<div style="left:280px;top:378px;width:91px;height:23px;background:#0078d4;border-radius:4px 4px 0 0;"></div>
<div style="left:286.6px;top:383px;font-family:'Liberation Sans', sans-serif;font-size:12.3px;line-height:16px;color:#ffffff;white-space:pre;letter-spacing:-0.248px;transform:scaleX(0.9702);transform-origin:0% 50%;">&#x27;Flush&#x27; calls</div>
<svg style="position:absolute;left:354px;top:386px;" width="11" height="11" viewBox="0 0 11 11"><path d="M0.8 0.8 L10.2 10.2 M10.2 0.8 L0.8 10.2" stroke="#f4f8fc" stroke-width="1"/></svg>
<div style="left:54px;top:400px;width:1401px;height:2px;background:#0078d4;"></div>
<svg style="position:absolute;left:1440px;top:388px;" width="11" height="7" viewBox="0 0 11 7"><path d="M0.8 0.8 l4.7 4.7 l4.7 -4.7" fill="none" stroke="#555" stroke-width="1.3"/></svg>
<div style="left:54px;top:402px;width:1401px;height:320px;background:#fff;border:1px solid #d4d6d9;border-top:none;"></div>
<div style="left:55px;top:402px;width:1399px;height:30px;background:#eeeff2;"></div>
<div style="left:55px;top:431px;width:1399px;height:1px;background:#c8cacd;"></div>
<svg style="position:absolute;left:61px;top:408px;" width="18" height="18" viewBox="0 0 18 18"><path d="M3.2 3.6 L9.6 0.8 L16 3.6 V11.4 L9.6 14.2 L3.2 11.4z" fill="#8d63c2"/>
<path d="M3.2 3.6 L9.6 6.4 L16 3.6 M9.6 6.4 V14.2" fill="none" stroke="#eeeff1" stroke-width="0.9"/>
<path d="M1 11.1 H4.4 V9 L8.9 12.95 L4.4 16.9 V14.9 H1z" fill="#5283d2" stroke="#eeeff1" stroke-width="1"/></svg>
<div style="left:82.4px;top:410px;font-family:'Liberation Sans', sans-serif;font-size:12.3px;line-height:16px;color:#1e1e1e;white-space:pre;letter-spacing:-0.248px;transform:scaleX(0.9763);transform-origin:0% 50%;">Show in Call Tree</div>
<div style="left:55px;top:432px;width:1399px;height:21px;background:#eeeff2;"></div>
<div style="left:55px;top:452px;width:1399px;height:1px;background:#c5c7ca;"></div>
<div style="left:554px;top:432px;width:1px;height:21px;background:#cfd1d4;"></div>
<div style="left:754px;top:432px;width:1px;height:21px;background:#cfd1d4;"></div>
<div style="left:904px;top:432px;width:1px;height:21px;background:#cfd1d4;"></div>
<div style="left:1054px;top:432px;width:1px;height:21px;background:#cfd1d4;"></div>
<div style="left:1204px;top:432px;width:1px;height:21px;background:#cfd1d4;"></div>
<div style="left:62.5px;top:435px;font-family:'Liberation Sans', sans-serif;font-size:12.3px;line-height:16px;color:#555;white-space:pre;letter-spacing:-0.248px;">Method</div>
<div style="left:562.4px;top:435px;font-family:'Liberation Sans', sans-serif;font-size:12.3px;line-height:16px;color:#555;white-space:pre;letter-spacing:-0.248px;transform:scaleX(0.9779);transform-origin:0% 50%;">Namespace</div>
<div style="left:762.6px;top:435px;font-family:'Liberation Sans', sans-serif;font-size:12.3px;line-height:16px;color:#555;white-space:pre;letter-spacing:-0.248px;transform:scaleX(0.9886);transform-origin:0% 50%;">Time Self</div>
<div style="left:912.2px;top:435px;font-family:'Liberation Sans', sans-serif;font-size:12.3px;line-height:16px;color:#555;white-space:pre;letter-spacing:-0.248px;transform:scaleX(1.0265);transform-origin:0% 50%;">Time With Children</div>
<div style="left:1062.5px;top:435px;font-family:'Liberation Sans', sans-serif;font-size:12.3px;line-height:16px;color:#555;white-space:pre;letter-spacing:-0.248px;transform:scaleX(1.0481);transform-origin:0% 50%;">Hit Count</div>
<svg style="position:absolute;left:814.5px;top:437.8px;" width="10" height="10" viewBox="0 0 10 10"><circle cx="5" cy="5" r="4.6" fill="#5a7fc4"/><text x="5" y="8.3" text-anchor="middle" font-family="Liberation Sans" font-weight="bold" font-size="8.5" fill="#fff">?</text></svg>
<svg style="position:absolute;left:1018.4px;top:437.6px;" width="10" height="10" viewBox="0 0 10 10"><circle cx="5" cy="5" r="4.6" fill="#5a7fc4"/><text x="5" y="8.3" text-anchor="middle" font-family="Liberation Sans" font-weight="bold" font-size="8.5" fill="#fff">?</text></svg>
<svg style="position:absolute;left:1117.4px;top:437.6px;" width="10" height="10" viewBox="0 0 10 10"><circle cx="5" cy="5" r="4.6" fill="#5a7fc4"/><text x="5" y="8.3" text-anchor="middle" font-family="Liberation Sans" font-weight="bold" font-size="8.5" fill="#fff">?</text></svg>
<svg style="position:absolute;left:1039px;top:439px;" width="9" height="6" viewBox="0 0 9 6"><path d="M0.6 0.6 l3.9 3.9 l3.9 -3.9" fill="none" stroke="#666" stroke-width="1"/></svg>
<div style="left:55px;top:476px;width:1399px;height:23px;background:#c4e5f8;"></div>
<div style="left:55px;top:475px;width:1150px;height:1px;background:#f0f0f0;"></div>
<div style="left:55px;top:498px;width:1150px;height:1px;background:#f0f0f0;"></div>
<div style="left:55px;top:521px;width:1150px;height:1px;background:#f0f0f0;"></div>
<div style="left:554px;top:453px;width:1px;height:69px;background:#ececec;"></div>
<div style="left:754px;top:453px;width:1px;height:69px;background:#ececec;"></div>
<div style="left:904px;top:453px;width:1px;height:69px;background:#ececec;"></div>
<div style="left:1054px;top:453px;width:1px;height:69px;background:#ececec;"></div>
<div style="left:1204px;top:453px;width:1px;height:69px;background:#ececec;"></div>
<svg style="position:absolute;left:61px;top:455px;" width="18" height="18" viewBox="0 0 18 18"><path d="M1 4 l6.5 -3 l6.5 3 v8 l-6.5 3 l-6.5 -3z" fill="#8d63c0"/>
<path d="M1 4 l6.5 3 l6.5 -3 M7.5 7 v8" fill="none" stroke="#fff" stroke-width="0.9"/>
<path d="M11.2 12 V10.6 A2.4 2.4 0 0 1 16 10.6 V12" fill="none" stroke="#fff" stroke-width="3"/>
<rect x="9.1" y="11" width="8.8" height="6.8" fill="#fff"/>
<path d="M11.3 12.2 V10.6 A2.3 2.3 0 0 1 15.9 10.6 V12.2" fill="none" stroke="#5a5a5a" stroke-width="1.1"/>
<rect x="10.1" y="12" width="6.8" height="4.8" fill="#eba43a"/><rect x="13.1" y="13.3" width="0.9" height="2.2" fill="#fff"/></svg>
<div style="left:83px;top:457px;font-family:'Liberation Sans', sans-serif;font-size:12.3px;line-height:16px;color:#1e1e1e;white-space:pre;letter-spacing:-0.248px;transform:scaleX(1.0057);transform-origin:0% 50%;">StreamWriter.Flush(bool flushStream, bool flushEncoder)</div>
<div style="left:562.4px;top:457px;font-family:'Liberation Sans', sans-serif;font-size:12.3px;line-height:16px;color:#1e1e1e;white-space:pre;letter-spacing:-0.248px;">System.IO</div>
<svg style="position:absolute;left:61px;top:478px;" width="18" height="18" viewBox="0 0 18 18"><path d="M1 4 l6.5 -3 l6.5 3 v8 l-6.5 3 l-6.5 -3z" fill="#8d63c0"/>
<path d="M1 4 l6.5 3 l6.5 -3 M7.5 7 v8" fill="none" stroke="#c4e5f8" stroke-width="0.9"/>
<path d="M11.2 12 V10.6 A2.4 2.4 0 0 1 16 10.6 V12" fill="none" stroke="#c4e5f8" stroke-width="3"/>
<rect x="9.1" y="11" width="8.8" height="6.8" fill="#c4e5f8"/>
<path d="M11.3 12.2 V10.6 A2.3 2.3 0 0 1 15.9 10.6 V12.2" fill="none" stroke="#5a5a5a" stroke-width="1.1"/>
<rect x="10.1" y="12" width="6.8" height="4.8" fill="#eba43a"/><rect x="13.1" y="13.3" width="0.9" height="2.2" fill="#fff"/></svg>
<div style="left:83px;top:480px;font-family:'Liberation Sans', sans-serif;font-size:12.3px;line-height:16px;color:#1e1e1e;white-space:pre;letter-spacing:-0.248px;transform:scaleX(1.0057);transform-origin:0% 50%;">StreamWriter.Flush(bool flushStream, bool flushEncoder)</div>
<div style="left:562.4px;top:480px;font-family:'Liberation Sans', sans-serif;font-size:12.3px;line-height:16px;color:#1e1e1e;white-space:pre;letter-spacing:-0.248px;">System.IO</div>
<svg style="position:absolute;left:61px;top:501px;" width="18" height="18" viewBox="0 0 18 18"><path d="M1 4 l6.5 -3 l6.5 3 v8 l-6.5 3 l-6.5 -3z" fill="#8d63c0"/>
<path d="M1 4 l6.5 3 l6.5 -3 M7.5 7 v8" fill="none" stroke="#fff" stroke-width="0.9"/>
<path d="M11.2 12 V10.6 A2.4 2.4 0 0 1 16 10.6 V12" fill="none" stroke="#fff" stroke-width="3"/>
<rect x="9.1" y="11" width="8.8" height="6.8" fill="#fff"/>
<path d="M11.3 12.2 V10.6 A2.3 2.3 0 0 1 15.9 10.6 V12.2" fill="none" stroke="#5a5a5a" stroke-width="1.1"/>
<rect x="10.1" y="12" width="6.8" height="4.8" fill="#eba43a"/><rect x="13.1" y="13.3" width="0.9" height="2.2" fill="#fff"/></svg>
<div style="left:83px;top:503px;font-family:'Liberation Sans', sans-serif;font-size:12.3px;line-height:16px;color:#1e1e1e;white-space:pre;letter-spacing:-0.248px;transform:scaleX(1.0057);transform-origin:0% 50%;">StreamWriter.Flush(bool flushStream, bool flushEncoder)</div>
<div style="left:562.4px;top:503px;font-family:'Liberation Sans', sans-serif;font-size:12.3px;line-height:16px;color:#1e1e1e;white-space:pre;letter-spacing:-0.248px;">System.IO</div>
<div style="left:855px;top:456px;width:47px;height:16px;background:#a3dcf8;"></div>
<div style="left:907px;top:456px;width:145px;height:16px;background:#a3dcf8;"></div>
<div style="left:1057px;top:456px;width:145px;height:16px;background:#a3dcf8;"></div>
<div style="left:901px;top:479px;width:1.5px;height:16px;background:#43aaea;"></div>
<div style="left:1049px;top:479px;width:3px;height:16px;background:#43aaea;"></div>
<div style="left:1200px;top:479px;width:2px;height:16px;background:#43aaea;"></div>
<div style="left:778.5px;top:457px;width:120px;text-align:right;font-family:'Liberation Sans', sans-serif;font-size:12.3px;line-height:16px;color:#1e1e1e;white-space:pre;letter-spacing:-0.248px;transform:scaleX(0.955);transform-origin:100% 50%;">16,191 %</div>
<div style="left:928.5px;top:457px;width:120px;text-align:right;font-family:'Liberation Sans', sans-serif;font-size:12.3px;line-height:16px;color:#1e1e1e;white-space:pre;letter-spacing:-0.248px;transform:scaleX(0.955);transform-origin:100% 50%;">49,644 %</div>
<div style="left:1078.5px;top:457px;width:120px;text-align:right;font-family:'Liberation Sans', sans-serif;font-size:12.3px;line-height:16px;color:#1e1e1e;white-space:pre;letter-spacing:-0.248px;transform:scaleX(0.955);transform-origin:100% 50%;">218 821</div>
<div style="left:778.5px;top:480px;width:120px;text-align:right;font-family:'Liberation Sans', sans-serif;font-size:12.3px;line-height:16px;color:#1e1e1e;white-space:pre;letter-spacing:-0.248px;transform:scaleX(0.955);transform-origin:100% 50%;">0,197 %</div>
<div style="left:928.5px;top:480px;width:120px;text-align:right;font-family:'Liberation Sans', sans-serif;font-size:12.3px;line-height:16px;color:#1e1e1e;white-space:pre;letter-spacing:-0.248px;transform:scaleX(0.955);transform-origin:100% 50%;">1,111 %</div>
<div style="left:1078.5px;top:480px;width:120px;text-align:right;font-family:'Liberation Sans', sans-serif;font-size:12.3px;line-height:16px;color:#1e1e1e;white-space:pre;letter-spacing:-0.248px;transform:scaleX(0.955);transform-origin:100% 50%;">3 479</div>
<div style="left:778.5px;top:503px;width:120px;text-align:right;font-family:'Liberation Sans', sans-serif;font-size:12.3px;line-height:16px;color:#1e1e1e;white-space:pre;letter-spacing:-0.248px;transform:scaleX(0.955);transform-origin:100% 50%;">0,002 %</div>
<div style="left:928.5px;top:503px;width:120px;text-align:right;font-family:'Liberation Sans', sans-serif;font-size:12.3px;line-height:16px;color:#1e1e1e;white-space:pre;letter-spacing:-0.248px;transform:scaleX(0.955);transform-origin:100% 50%;">0,117 %</div>
<div style="left:1078.5px;top:503px;width:120px;text-align:right;font-family:'Liberation Sans', sans-serif;font-size:12.3px;line-height:16px;color:#1e1e1e;white-space:pre;letter-spacing:-0.248px;transform:scaleX(0.955);transform-origin:100% 50%;">1</div>
<div style="left:54px;top:728px;width:1401px;height:330px;background:#eef0f2;border:1px solid #d6d8db;"></div>
<div style="left:61.3px;top:732px;font-family:'Liberation Sans', sans-serif;font-size:12.3px;line-height:16px;color:#1e1e1e;white-space:pre;letter-spacing:-0.248px;transform:scaleX(0.9758);transform-origin:0% 50%;">Source Code</div>
<svg style="position:absolute;left:137px;top:738px;overflow:hidden" width="1274" height="5" viewBox="0 0 1274 5"><defs><pattern id="grp2" x="0" y="0" width="4" height="4" patternUnits="userSpaceOnUse"><rect x="0" y="0" width="1" height="1" fill="#8a8a8a"/><rect x="2" y="2" width="1" height="1" fill="#8a8a8a"/></pattern></defs><rect x="0" y="0" width="1274" height="5" fill="url(#grp2)"/></svg>
<svg style="position:absolute;left:1419px;top:736px;" width="10" height="8" viewBox="0 0 10 8"><path d="M0.8 3 l3.6 3.8 l3.6 -3.8" fill="none" stroke="#444" stroke-width="1.2"/></svg>
<svg style="position:absolute;left:1437px;top:733px;" width="10" height="13" viewBox="0 0 10 13"><path d="M2.6 2.5 h3.8 v5.8 h-3.8z" fill="none" stroke="#444" stroke-width="1"/><rect x="5.4" y="2" width="1.6" height="6.3" fill="#444"/><path d="M1 8.8 h7 M4.5 8.8 v3.5" fill="none" stroke="#444" stroke-width="1.1"/></svg>
<div style="left:60px;top:755px;width:350px;height:21px;background:#fff;border:1px solid #c6c8cb;"></div>
<div style="left:64.3px;top:758px;font-family:'Liberation Sans', sans-serif;font-size:12.3px;line-height:16px;color:#1e1e1e;white-space:pre;letter-spacing:-0.248px;">Decompile</div>
<svg style="position:absolute;left:398px;top:763px;" width="8" height="6" viewBox="0 0 8 6"><path d="M0.8 1.2 l3 3 l3 -3" fill="none" stroke="#444" stroke-width="1.2"/></svg>
<svg style="position:absolute;left:413px;top:755px;" width="18" height="19" viewBox="0 0 18 19"><path d="M1.2 6.5 h5 l1.5 2 h5.5 v2.5" fill="none" stroke="#e6c08e" stroke-width="1.3"/>
<path d="M1 17.5 v-11 M1 17.5 h12.5 l3.2 -7.5 h-12.5 l-3.2 7.5z" fill="#e6c08e" stroke="#e6c08e" stroke-width="0.6"/>
<path d="M9 2.3 h4.5 l2.5 2.5" fill="none" stroke="#8fd08a" stroke-width="1.3"/><path d="M16.3 1.6 v3.6 h-3.6" fill="none" stroke="#8fd08a" stroke-width="1.3"/></svg>
<div style="left:435px;top:756px;width:1px;height:18px;background:#cfd1d4;"></div>
<svg style="position:absolute;left:440px;top:756px;" width="18" height="18" viewBox="0 0 18 18"><path d="M4 12.5 h-3.3 v-11.8 h7.3 l1.2 1.2" fill="none" stroke="#a6a6a6" stroke-width="1"/>
<path d="M6.6 4.3 h6 l3.5 3.5 v9.2 h-9.5z" fill="#eef0f2" stroke="#9fb0d2" stroke-width="1.1"/><path d="M12.3 4.3 v3.6 h3.8z" fill="#9fb0d2"/></svg>
<svg style="position:absolute;left:463px;top:756px;" width="16" height="18" viewBox="0 0 16 18"><path d="M9.5 1 h5.5 v8.5 l-1.5 1.5 v5 h-3" fill="none" stroke="#e6c08e" stroke-width="1.2"/>
<path d="M0.5 0.6 h9.5 l0.6 0.8 v16 l-10.1 -2.5z" fill="#e6c08e"/></svg>
<svg style="position:absolute;left:487px;top:766px;" width="7" height="8" viewBox="0 0 7 8"><line x1="0.5" y1="0.5" x2="6.5" y2="0.5" stroke="#888" stroke-width="1"/><path d="M1 3 l2.5 2.5 l2.5 -2.5" fill="none" stroke="#888" stroke-width="1"/></svg>
<div style="left:55px;top:780px;width:1399px;height:21px;background:#e8eaee;border-top:1px solid #d0d2d5;border-bottom:1px solid #c8cacd;"></div>
<div style="left:99px;top:780px;width:1px;height:21px;background:#c8cacd;"></div>
<div style="left:224px;top:780px;width:1px;height:21px;background:#c8cacd;"></div>
<div style="left:349px;top:780px;width:1px;height:21px;background:#c8cacd;"></div>
<div style="left:62.2px;top:783px;font-family:'Liberation Sans', sans-serif;font-size:12.3px;line-height:16px;color:#555;white-space:pre;letter-spacing:-0.248px;">Line</div>
<div style="left:107.3px;top:783px;font-family:'Liberation Sans', sans-serif;font-size:12.3px;line-height:16px;color:#555;white-space:pre;letter-spacing:-0.248px;transform:scaleX(1.0481);transform-origin:0% 50%;">Hit Count</div>
<svg style="position:absolute;left:162.4px;top:785.4px;" width="10" height="10" viewBox="0 0 10 10"><circle cx="5" cy="5" r="4.6" fill="#5a7fc4"/><text x="5" y="8.3" text-anchor="middle" font-family="Liberation Sans" font-weight="bold" font-size="8.5" fill="#fff">?</text></svg>
<div style="left:232px;top:783px;font-family:'Liberation Sans', sans-serif;font-size:12.3px;line-height:16px;color:#555;white-space:pre;letter-spacing:-0.248px;">Time</div>
<svg style="position:absolute;left:262.4px;top:785.4px;" width="10" height="10" viewBox="0 0 10 10"><circle cx="5" cy="5" r="4.6" fill="#5a7fc4"/><text x="5" y="8.3" text-anchor="middle" font-family="Liberation Sans" font-weight="bold" font-size="8.5" fill="#fff">?</text></svg>
<div style="left:55px;top:801px;width:1399px;height:239px;background:#fff;overflow:hidden;"></div>
<div style="left:99px;top:801px;width:1px;height:239px;background:#eaeaea;"></div>
<div style="left:224px;top:801px;width:1px;height:239px;background:#eaeaea;"></div>
<div style="left:349px;top:801px;width:1px;height:239px;background:#eaeaea;"></div>
<div style="left:55px;top:801px;width:1382px;height:239px;overflow:hidden"><div style="left:314px;top:111.5px;width:1068px;height:16px;border:2px solid #e9e9e9;"></div><div style="left:0px;top:-6.5px;width:39.599999999999994px;text-align:right;font-family:'Liberation Mono', monospace;font-size:10.8px;line-height:14px;color:#7c7c7c;white-space:pre">1028</div><div style="left:314.3px;top:-6.5px;font-family:'Liberation Mono', monospace;font-size:10.95px;line-height:14px;color:#000;white-space:pre">    {</div><div style="left:0px;top:10.5px;width:39.599999999999994px;text-align:right;font-family:'Liberation Mono', monospace;font-size:10.8px;line-height:14px;color:#7c7c7c;white-space:pre">1029</div><div style="left:314.3px;top:10.5px;font-family:'Liberation Mono', monospace;font-size:10.95px;line-height:14px;color:#000;white-space:pre">        CheckAsyncTaskInProgress();</div><div style="left:0px;top:27.5px;width:39.599999999999994px;text-align:right;font-family:'Liberation Mono', monospace;font-size:10.8px;line-height:14px;color:#7c7c7c;white-space:pre">1030</div><div style="left:314.3px;top:27.5px;font-family:'Liberation Mono', monospace;font-size:10.95px;line-height:14px;color:#000;white-space:pre">        Flush(flushStream: <span style="color:#0000ff">true</span>, flushEncoder: <span style="color:#0000ff">true</span>);</div><div style="left:0px;top:44.5px;width:39.599999999999994px;text-align:right;font-family:'Liberation Mono', monospace;font-size:10.8px;line-height:14px;color:#7c7c7c;white-space:pre">1031</div><div style="left:314.3px;top:44.5px;font-family:'Liberation Mono', monospace;font-size:10.95px;line-height:14px;color:#000;white-space:pre">    }</div><div style="left:0px;top:61.5px;width:39.599999999999994px;text-align:right;font-family:'Liberation Mono', monospace;font-size:10.8px;line-height:14px;color:#7c7c7c;white-space:pre">1032</div><div style="left:314.3px;top:61.5px;font-family:'Liberation Mono', monospace;font-size:10.95px;line-height:14px;color:#000;white-space:pre"></div><div style="left:0px;top:78.5px;width:39.599999999999994px;text-align:right;font-family:'Liberation Mono', monospace;font-size:10.8px;line-height:14px;color:#7c7c7c;white-space:pre">1033</div><div style="left:314.3px;top:78.5px;font-family:'Liberation Mono', monospace;font-size:10.95px;line-height:14px;color:#000;white-space:pre">    <span style="color:#0000ff">private</span> <span style="color:#0000ff">void</span> Flush(<span style="color:#0000ff">bool</span> flushStream, <span style="color:#0000ff">bool</span> flushEncoder)</div><div style="left:0px;top:95.5px;width:39.599999999999994px;text-align:right;font-family:'Liberation Mono', monospace;font-size:10.8px;line-height:14px;color:#7c7c7c;white-space:pre">1034</div><div style="left:314.3px;top:95.5px;font-family:'Liberation Mono', monospace;font-size:10.95px;line-height:14px;color:#000;white-space:pre">    {</div><div style="left:0px;top:112.5px;width:39.599999999999994px;text-align:right;font-family:'Liberation Mono', monospace;font-size:10.8px;line-height:14px;color:#1a1a1a;white-space:pre">1035</div><div style="left:314.3px;top:112.5px;font-family:'Liberation Mono', monospace;font-size:10.95px;line-height:14px;color:#000;white-space:pre">        ThrowIfDisposed();</div><div style="left:0px;top:129.5px;width:39.599999999999994px;text-align:right;font-family:'Liberation Mono', monospace;font-size:10.8px;line-height:14px;color:#7c7c7c;white-space:pre">1036</div><div style="left:314.3px;top:129.5px;font-family:'Liberation Mono', monospace;font-size:10.95px;line-height:14px;color:#000;white-space:pre">        <span style="color:#0000ff">if</span> (_charPos == 0 &amp;&amp; !flushStream &amp;&amp; !flushEncoder)</div><div style="left:0px;top:146.5px;width:39.599999999999994px;text-align:right;font-family:'Liberation Mono', monospace;font-size:10.8px;line-height:14px;color:#7c7c7c;white-space:pre">1037</div><div style="left:314.3px;top:146.5px;font-family:'Liberation Mono', monospace;font-size:10.95px;line-height:14px;color:#000;white-space:pre">        {</div><div style="left:0px;top:163.5px;width:39.599999999999994px;text-align:right;font-family:'Liberation Mono', monospace;font-size:10.8px;line-height:14px;color:#7c7c7c;white-space:pre">1038</div><div style="left:314.3px;top:163.5px;font-family:'Liberation Mono', monospace;font-size:10.95px;line-height:14px;color:#000;white-space:pre">            <span style="color:#0000ff">return</span>;</div><div style="left:0px;top:180.5px;width:39.599999999999994px;text-align:right;font-family:'Liberation Mono', monospace;font-size:10.8px;line-height:14px;color:#7c7c7c;white-space:pre">1039</div><div style="left:314.3px;top:180.5px;font-family:'Liberation Mono', monospace;font-size:10.95px;line-height:14px;color:#000;white-space:pre">        }</div><div style="left:0px;top:197.5px;width:39.599999999999994px;text-align:right;font-family:'Liberation Mono', monospace;font-size:10.8px;line-height:14px;color:#7c7c7c;white-space:pre">1040</div><div style="left:314.3px;top:197.5px;font-family:'Liberation Mono', monospace;font-size:10.95px;line-height:14px;color:#000;white-space:pre">        <span style="color:#0000ff">if</span> (!_haveWrittenPreamble)</div><div style="left:0px;top:214.5px;width:39.599999999999994px;text-align:right;font-family:'Liberation Mono', monospace;font-size:10.8px;line-height:14px;color:#7c7c7c;white-space:pre">1041</div><div style="left:314.3px;top:214.5px;font-family:'Liberation Mono', monospace;font-size:10.95px;line-height:14px;color:#000;white-space:pre">        {</div><div style="left:0px;top:231.5px;width:39.599999999999994px;text-align:right;font-family:'Liberation Mono', monospace;font-size:10.8px;line-height:14px;color:#7c7c7c;white-space:pre">1042</div><div style="left:314.3px;top:231.5px;font-family:'Liberation Mono', monospace;font-size:10.95px;line-height:14px;color:#000;white-space:pre">            _haveWrittenPreamble = <span style="color:#0000ff">true</span>;</div><div style="left:47px;top:111.5px;width:120px;height:15px;background:#9ddcfa"></div><div style="left:42.5px;top:112.5px;width:120px;text-align:right;font-family:'Liberation Sans', sans-serif;font-size:11.8px;line-height:14.75px;color:#1e1e1e;white-space:pre;transform:scaleX(0.88);transform-origin:100% 50%;">222 301</div><div style="left:169px;top:112.5px;width:120px;text-align:right;font-family:'Liberation Sans', sans-serif;font-size:11.8px;line-height:14.75px;color:#1e1e1e;white-space:pre;transform:scaleX(0.88);transform-origin:100% 50%;">0,564 %</div><div style="left:291px;top:111.5px;width:1px;height:15px;background:#8fc8ea"></div><div style="left:47px;top:128.5px;width:120px;height:15px;background:#9ddcfa"></div><div style="left:42.5px;top:129.5px;width:120px;text-align:right;font-family:'Liberation Sans', sans-serif;font-size:11.8px;line-height:14.75px;color:#1e1e1e;white-space:pre;transform:scaleX(0.88);transform-origin:100% 50%;">222 301</div><div style="left:169px;top:129.5px;width:120px;text-align:right;font-family:'Liberation Sans', sans-serif;font-size:11.8px;line-height:14.75px;color:#1e1e1e;white-space:pre;transform:scaleX(0.88);transform-origin:100% 50%;">0,266 %</div><div style="left:47px;top:196.5px;width:120px;height:15px;background:#9ddcfa"></div><div style="left:42.5px;top:197.5px;width:120px;text-align:right;font-family:'Liberation Sans', sans-serif;font-size:11.8px;line-height:14.75px;color:#1e1e1e;white-space:pre;transform:scaleX(0.88);transform-origin:100% 50%;">222 301</div><div style="left:169px;top:197.5px;width:120px;text-align:right;font-family:'Liberation Sans', sans-serif;font-size:11.8px;line-height:14.75px;color:#1e1e1e;white-space:pre;transform:scaleX(0.88);transform-origin:100% 50%;">0,281 %</div><div style="left:42.5px;top:231.5px;width:120px;text-align:right;font-family:'Liberation Sans', sans-serif;font-size:11.8px;line-height:14.75px;color:#1e1e1e;white-space:pre;transform:scaleX(0.88);transform-origin:100% 50%;">1</div><div style="left:169px;top:231.5px;width:120px;text-align:right;font-family:'Liberation Sans', sans-serif;font-size:11.8px;line-height:14.75px;color:#1e1e1e;white-space:pre;transform:scaleX(0.88);transform-origin:100% 50%;">&lt; 0,001 %</div></div>
<div style="left:1437px;top:801px;width:17px;height:239px;background:#f6f6f6;"></div>
<svg style="position:absolute;left:1439px;top:801px;" width="13" height="15" viewBox="0 0 13 15"><path d="M1 6.5 h11 M1 9.5 h11 M6.5 1.2 v4.3 M6.5 10.5 v4.3 M4.6 3.2 l1.9 -2 l1.9 2 M4.6 12.8 l1.9 2 l1.9 -2" fill="none" stroke="#555" stroke-width="1"/></svg>
<svg style="position:absolute;left:1440px;top:821px;" width="10" height="6" viewBox="0 0 10 6"><path d="M0.8 5.2 l4.2 -4.2 l4.2 4.2" fill="none" stroke="#555" stroke-width="1.1"/></svg>
<div style="left:1443px;top:951px;width:5px;height:9px;background:#c2c2c2;border-radius:2.5px;"></div>
<svg style="position:absolute;left:1440px;top:1028px;" width="10" height="6" viewBox="0 0 10 6"><path d="M0.8 0.8 l4.2 4.2 l4.2 -4.2" fill="none" stroke="#555" stroke-width="1.1"/></svg>
<div style="left:55px;top:1040px;width:1399px;height:17px;background:#fcfcfc;"></div>
<svg style="position:absolute;left:61px;top:1044px;" width="6" height="10" viewBox="0 0 6 10"><path d="M5.2 0.8 l-4.4 4.2 l4.4 4.2" fill="none" stroke="#555" stroke-width="1.1"/></svg>
<svg style="position:absolute;left:1426px;top:1044px;" width="6" height="10" viewBox="0 0 6 10"><path d="M0.8 0.8 l4.4 4.2 l-4.4 4.2" fill="none" stroke="#555" stroke-width="1.1"/></svg>
<div style="left:47px;top:1064px;width:1415px;height:24px;background:#e6e8ea;border-top:1px solid #cfd1d4;border-radius:0 0 7px 7px;"></div>
<div style="left:0px;top:0px;width:1509px;height:374px;background:rgba(0,0,0,0.3);"></div>
<div style="left:0px;top:726px;width:1509px;height:441px;background:rgba(0,0,0,0.3);"></div>
<div style="left:0px;top:374px;width:50px;height:352px;background:rgba(0,0,0,0.3);"></div>
<div style="left:1459px;top:374px;width:50px;height:352px;background:rgba(0,0,0,0.3);"></div>
</body></html>
